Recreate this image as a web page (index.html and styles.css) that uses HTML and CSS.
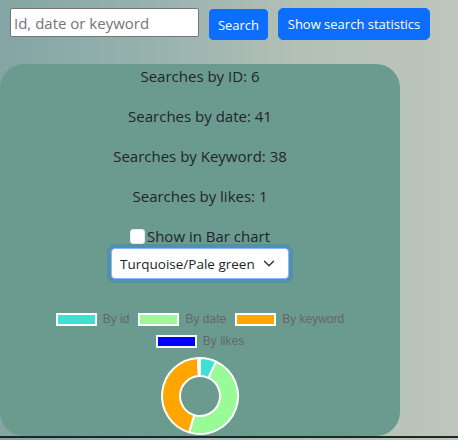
FILE: index.html
```html
<!DOCTYPE html>
<html lang="en">
<head>
<meta charset="utf-8">
<title>Search statistics</title>
<link rel="stylesheet" href="styles.css">
</head>
<body>
<div class="page">
  <form class="toolbar">
    <input class="search-input" type="text" placeholder="Id, date or keyword">
    <button type="button" class="btn btn-search">Search</button>
    <button type="button" class="btn btn-stats">Show search statistics</button>
  </form>
  <section class="panel">
    <p class="stat">Searches by ID: 6</p>
    <p class="stat">Searches by date: 41</p>
    <p class="stat">Searches by Keyword: 38</p>
    <p class="stat">Searches by likes: 1</p>
    <label class="check-row"><input type="checkbox" class="check">Show in Bar chart</label>
    <div class="select-row">
      <div class="select-wrap">
        <select class="palette">
          <option>Turquoise/Pale green/Orange/Blue</option>
        </select>
        <svg class="chevron" width="12" height="9" viewBox="0 0 16 12" aria-hidden="true"><path d="M2 3l6 6 6-6" fill="none" stroke="#343a40" stroke-width="2" stroke-linecap="round" stroke-linejoin="round"/></svg>
      </div>
    </div>
    <div class="legend">
      <div class="legend-row">
        <span class="legend-item"><span class="swatch sw-id"></span>By id</span>
        <span class="legend-item"><span class="swatch sw-date"></span>By date</span>
        <span class="legend-item"><span class="swatch sw-keyword"></span>By keyword</span>
      </div>
      <div class="legend-row">
        <span class="legend-item"><span class="swatch sw-likes"></span>By likes</span>
      </div>
    </div>
    <div class="chart">
      <svg width="82" height="82" viewBox="0 0 82 82" aria-label="Doughnut chart">
        <g stroke="#fff" stroke-width="2" stroke-linejoin="round">
          <path fill="#40e0d0" d="M41 3A38 38 0 0 1 57.13 6.59L49.49 22.89A20 20 0 0 0 41 21Z"/>
          <path fill="#98fb98" d="M57.13 6.59A38 38 0 0 1 30.05 77.39L35.24 60.15A20 20 0 0 0 49.49 22.89Z"/>
          <path fill="#ffa500" d="M30.05 77.39A38 38 0 0 1 38.92 3.06L39.9 21.03A20 20 0 0 0 35.24 60.15Z"/>
          <path fill="#0000ff" d="M38.92 3.06A38 38 0 0 1 41 3L41 21A20 20 0 0 0 39.9 21.03Z"/>
        </g>
      </svg>
    </div>
  </section>
  <div class="rule"></div>
</div>
</body>
</html>
```
FILE: styles.css
```css
html, body {
  margin: 0;
  padding: 0;
}
body {
  width: 458px;
  height: 440px;
  overflow: hidden;
  background: linear-gradient(90deg, #84a5a4 0%, #98b3ae 35%, #b2c0b6 65%, #bfc6bb 100%);
  font-family: "Open Sans", "Noto Sans", sans-serif;
  color: #212529;
}
.page {
  display: flex;
  flex-direction: column;
}
.toolbar {
  display: flex;
  align-items: flex-start;
  height: 64px;
  box-sizing: border-box;
  padding: 8px 0 0 10px;
  margin: 0;
}
.search-input {
  width: 189px;
  height: 29px;
  box-sizing: border-box;
  border: 1px solid #767676;
  border-radius: 2px;
  padding: 0 3px;
  font-family: "Open Sans", sans-serif;
  font-size: 15px;
  color: #212529;
  background: #fff;
  outline: none;
}
.search-input::placeholder {
  color: #757575;
}
.btn {
  border: 1px solid #0d6efd;
  background: #0d6efd;
  color: #fff;
  font-family: "Open Sans", sans-serif;
  font-size: 13px;
  border-radius: 4px;
  box-sizing: border-box;
  padding: 0;
  cursor: pointer;
}
.btn-search {
  width: 59px;
  height: 31px;
  margin: 1px 0 0 10px;
}
.btn-stats {
  width: 152px;
  height: 32px;
  margin-left: 10px;
  border-radius: 5px;
}
.panel {
  width: 400px;
  height: 372px;
  box-sizing: border-box;
  background: #6b9b8f;
  border-radius: 24px;
  text-align: center;
  overflow: hidden;
  display: flex;
  flex-direction: column;
  align-items: center;
}
.stat {
  margin: 0 0 16px;
  font-size: 15px;
  line-height: 24px;
}
.check-row {
  display: flex;
  align-items: center;
  height: 24px;
  font-size: 15px;
  line-height: 24px;
}
.check {
  appearance: none;
  -webkit-appearance: none;
  width: 15px;
  height: 15px;
  margin: 1px 2px 0 0;
  background: #fff;
  border: 1px solid #e6ecea;
  border-radius: 3px;
}
.select-row {
  display: flex;
  justify-content: center;
}
.select-wrap {
  position: relative;
  width: 178px;
  height: 31px;
}
.palette {
  appearance: none;
  -webkit-appearance: none;
  width: 178px;
  height: 31px;
  box-sizing: border-box;
  padding: 0 33px 0 8px;
  border: 1px solid #86b7fe;
  border-radius: 4px;
  background: #fff;
  box-shadow: 0 0 0 4px rgba(13, 110, 253, 0.25);
  font-family: "Open Sans", sans-serif;
  font-size: 13.5px;
  color: #212529;
  outline: none;
}
.chevron {
  position: absolute;
  right: 14px;
  top: 11px;
  pointer-events: none;
}
.legend {
  margin-top: 29px;
  display: flex;
  flex-direction: column;
  align-items: center;
  font-family: "Liberation Sans", Arial, sans-serif;
  font-size: 12px;
  color: #666;
}
.legend-row {
  display: flex;
  justify-content: center;
  align-items: center;
  height: 22px;
  gap: 9px;
}
.legend-item {
  display: flex;
  align-items: center;
  gap: 6px;
}
.swatch {
  display: block;
  width: 37px;
  height: 9px;
  border: 2px solid #fff;
}
.sw-id { background: #40e0d0; }
.sw-date { background: #98fb98; }
.sw-keyword { background: #ffa500; }
.sw-likes { background: #0000ff; }
.chart {
  margin-top: 3px;
  display: flex;
  justify-content: center;
}
.chart svg {
  display: block;
}
.rule {
  height: 2px;
  background: #1f2726;
}
```
